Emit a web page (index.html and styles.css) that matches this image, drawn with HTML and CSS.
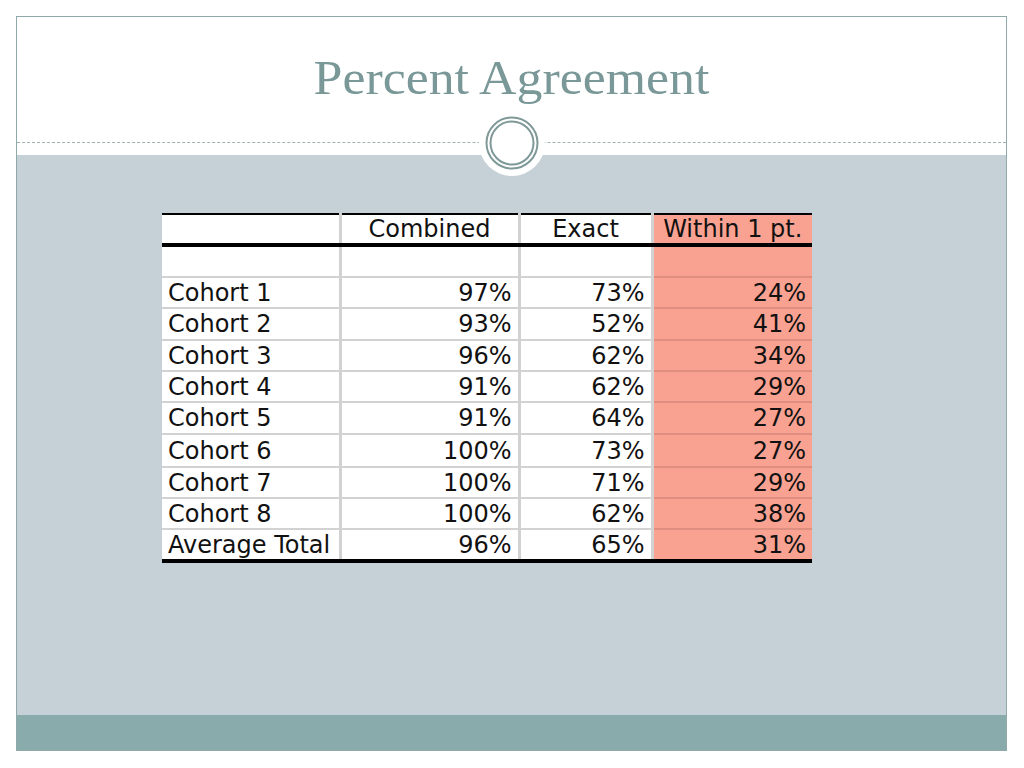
FILE: index.html
```html
<!DOCTYPE html>
<html>
<head>
<meta charset="utf-8">
<link rel="stylesheet" href="styles.css">
</head>
<body>
<div class="slide">
  <header class="head">
    <h1 class="title">Percent Agreement</h1>
    <div class="rule"></div>
    <div class="badge">
      <svg width="66" height="66" viewBox="0 0 66 66">
        <circle cx="33" cy="33" r="25.5" fill="none" stroke="#7f9898" stroke-width="2"/>
        <circle cx="33" cy="33" r="21.5" fill="none" stroke="#7f9898" stroke-width="2"/>
      </svg>
    </div>
  </header>
  <main class="body">
    <table class="data">
      <colgroup>
        <col class="c1"><col class="c2"><col class="c3"><col class="c4">
      </colgroup>
      <thead>
        <tr><th></th><th>Combined</th><th>Exact</th><th class="hl">Within 1 pt.</th></tr>
      </thead>
      <tbody>
        <tr class="blank"><td></td><td></td><td></td><td class="hl"></td></tr>
        <tr><td>Cohort 1</td><td>97%</td><td>73%</td><td class="hl">24%</td></tr>
        <tr class="tall"><td>Cohort 2</td><td>93%</td><td>52%</td><td class="hl">41%</td></tr>
        <tr><td>Cohort 3</td><td>96%</td><td>62%</td><td class="hl">34%</td></tr>
        <tr><td>Cohort 4</td><td>91%</td><td>62%</td><td class="hl">29%</td></tr>
        <tr class="tall"><td>Cohort 5</td><td>91%</td><td>64%</td><td class="hl">27%</td></tr>
        <tr class="taller"><td>Cohort 6</td><td>100%</td><td>73%</td><td class="hl">27%</td></tr>
        <tr><td>Cohort 7</td><td>100%</td><td>71%</td><td class="hl">29%</td></tr>
        <tr><td>Cohort 8</td><td>100%</td><td>62%</td><td class="hl">38%</td></tr>
        <tr class="last"><td>Average Total</td><td>96%</td><td>65%</td><td class="hl">31%</td></tr>
      </tbody>
    </table>
  </main>
  <footer class="foot"></footer>
</div>
</body>
</html>
```

FILE: styles.css
```css
html, body {
  margin: 0;
  padding: 0;
  background: #ffffff;
}
.slide {
  margin: 16px 0 0 16px;
  width: 989px;
  height: 733px;
  border: 1px solid #8fa8a8;
  display: flex;
  flex-direction: column;
}
.head {
  position: relative;
  height: 138px;
  background: #ffffff;
  flex: none;
}
.title {
  margin: 0;
  padding-top: 31px;
  text-align: center;
  font-family: "Liberation Serif", "Times New Roman", serif;
  font-weight: normal;
  font-size: 48px;
  line-height: 60px;
  color: #7a9898;
  transform: scaleX(1.08);
}
.rule {
  position: absolute;
  left: 0;
  right: 0;
  top: 125px;
  border-top: 1px dashed #9fb3b3;
}
.badge {
  position: absolute;
  left: 462px;
  top: 93px;
  width: 66px;
  height: 66px;
  border-radius: 50%;
  background: #ffffff;
  z-index: 2;
}
.badge svg { display: block; }
.body {
  flex: 1;
  background: #c6d1d7;
  padding: 58px 0 0 145px;
}
.foot {
  flex: none;
  height: 35px;
  background: #8aabab;
}
.data {
  border-collapse: collapse;
  font-family: "DejaVu Sans", Verdana, sans-serif;
  font-size: 24px;
  color: #111;
  background: #ffffff;
  table-layout: fixed;
  width: 650px;
}
.c1 { width: 178px; }
.c2 { width: 179px; }
.c3 { width: 133px; }
.c4 { width: 160px; }
.data th, .data td {
  border: 2px solid #d2d2d2;
  border-left-width: 3px;
  border-right-width: 3px;
  padding: 0 6px;
  height: 29px;
  line-height: 26px;
  white-space: nowrap;
}
.data th {
  font-weight: normal;
  text-align: center;
  border-top: 2px solid #000;
  border-bottom: 4px solid #000;
  height: 28px;
  padding-top: 0;
}
.data td { text-align: right; }
.data td:first-child { text-align: left; border-left: none; }
.data th:first-child { border-left: none; }
.data td.hl, .data th.hl {
  background: #f9a292;
  border-left-color: #dd9282;
  border-right: none;
}
.data td.hl { border-top-color: #de8f80; border-bottom-color: #de8f80; }
.data .blank td { height: 29px; }
.data .tall td { height: 30px; }
.data .taller td { height: 31px; }
.data .last td { border-bottom: 4px solid #000; }
```
